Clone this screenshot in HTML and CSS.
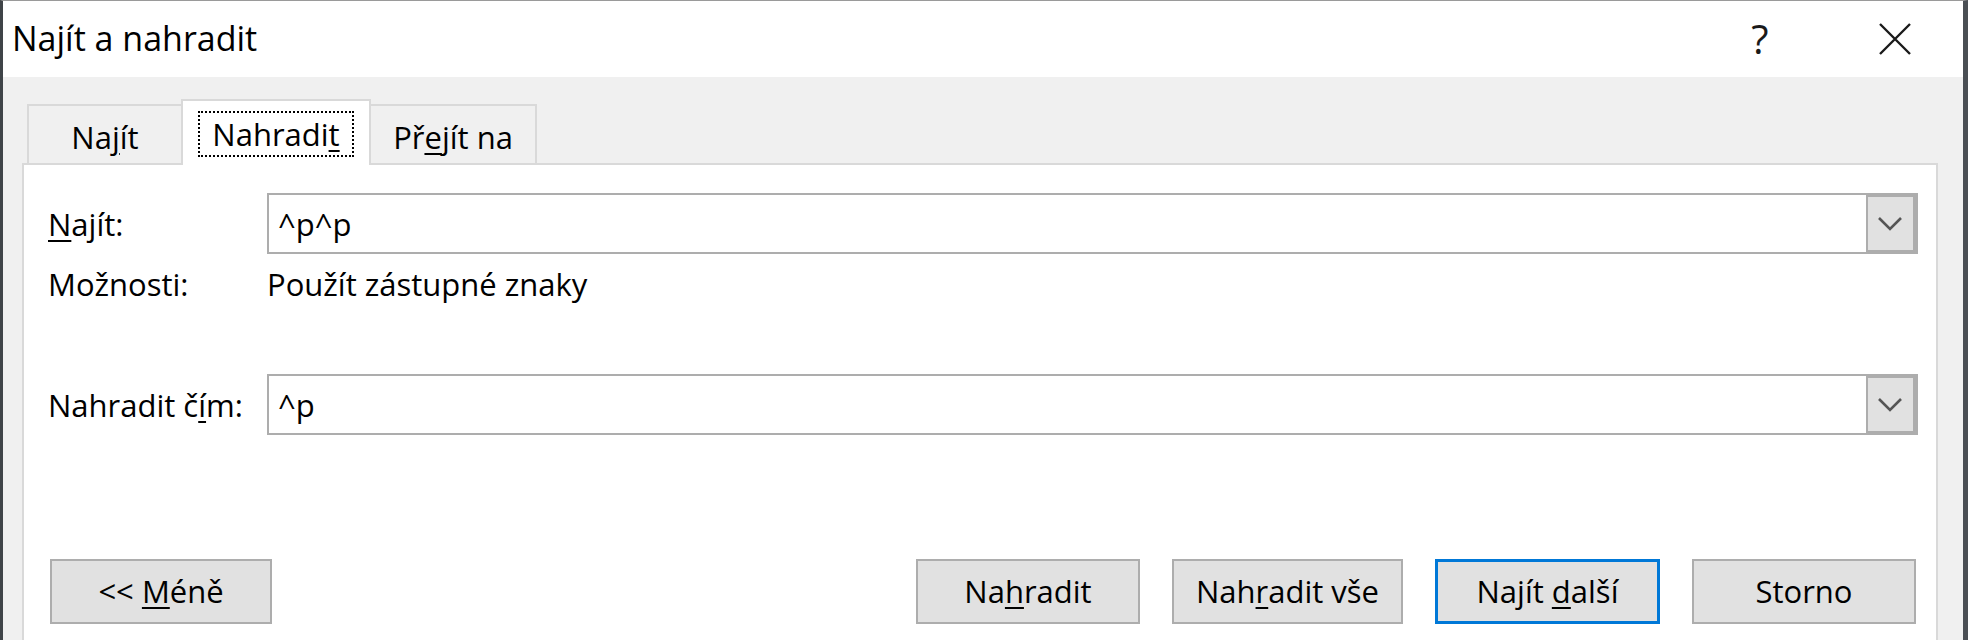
FILE: index.html
```html
<!DOCTYPE html>
<html lang="cs">
<head>
<meta charset="utf-8">
<title>Najít a nahradit</title>
<link rel="stylesheet" href="styles.css">
</head>
<body>
<div class="window">
  <div class="titlebar">
    <div class="title">Najít a nahradit</div>
    <div class="help">?</div>
    <div class="close">
      <svg width="32" height="32" viewBox="0 0 32 32"><path d="M1 1 L31 31 M31 1 L1 31" stroke="#1a1a1a" stroke-width="2.4" fill="none"/></svg>
    </div>
  </div>
  <div class="client">
    <div class="tabs">
      <div class="tab tab-find">Na<u>j</u>ít</div>
      <div class="tab tab-active"><span class="focus">Nahradi<u>t</u></span></div>
      <div class="tab tab-goto">Př<u>e</u>jít na</div>
    </div>
    <div class="panel">
      <div class="form">
        <div class="lbl"><u>N</u>ajít:</div>
        <div class="combo">
          <span class="val">^p^p</span>
          <span class="drop"><svg width="26" height="15" viewBox="0 0 26 15"><polyline points="2,2 13,13 24,2" fill="none" stroke="#555" stroke-width="2.6"/></svg></span>
        </div>
        <div class="lbl opt-row">Možnosti:</div>
        <div class="opt opt-row">Použít zástupné znaky</div>
        <div class="lbl repl-row">Nahradit č<u>í</u>m:</div>
        <div class="combo repl-row">
          <span class="val">^p</span>
          <span class="drop"><svg width="26" height="15" viewBox="0 0 26 15"><polyline points="2,2 13,13 24,2" fill="none" stroke="#555" stroke-width="2.6"/></svg></span>
        </div>
      </div>
      <div class="buttons">
        <div class="btn btn-less">&lt;&lt; <u>M</u>éně</div>
        <div class="btn btn-first">Na<u>h</u>radit</div>
        <div class="btn btn-wide">Nah<u>r</u>adit vše</div>
        <div class="btn btn-default">Najít <u>d</u>alší</div>
        <div class="btn">Storno</div>
      </div>
    </div>
  </div>
</div>
</body>
</html>
```

FILE: styles.css
```css
* { box-sizing: border-box; }
html, body { margin: 0; padding: 0; }
body {
  width: 1968px;
  height: 640px;
  overflow: hidden;
  background: #f0f0f0;
  font-family: "Open Sans", "Noto Sans", sans-serif;
  font-size: 31px;
  color: #000;
}
u {
  text-decoration: underline;
  text-decoration-thickness: 2px;
  text-underline-offset: 4px;
}
.window {
  width: 1968px;
  height: 640px;
  border-left: 3px solid #3f4448;
  border-right: 5px solid #4a4f54;
  border-top: 1px solid #9a9a9a;
  display: flex;
  flex-direction: column;
  background: #f0f0f0;
}
.titlebar {
  height: 76px;
  flex: none;
  background: #fff;
  display: flex;
  align-items: center;
  padding-left: 9px;
  padding-right: 23px;
}
.title {
  font-size: 34px;
  line-height: 42px;
  margin-top: -2px;
}
.help {
  margin-left: auto;
  width: 60px;
  text-align: center;
  font-size: 40px;
  line-height: 42px;
  color: #1a1a1a;
}
.close {
  width: 90px;
  margin-left: 60px;
  display: flex;
  justify-content: center;
  align-items: center;
}
.close svg { display: block; }
.client {
  flex: 1;
  padding: 22px 25px 0 19px;
  display: flex;
  flex-direction: column;
}
.tabs {
  display: flex;
  align-items: flex-end;
  padding-left: 5px;
  height: 66px;
  margin-bottom: -2px;
  position: relative;
  z-index: 1;
}
.tab {
  height: 59px;
  margin-bottom: 2px;
  border: 2px solid #d9d9d9;
  border-bottom: none;
  background: #f0f0f0;
  text-align: center;
  line-height: 42px;
  padding-top: 10px;
}
.tab-find { width: 156px; }
.tab-goto { width: 168px; margin-left: -2px; }
.tab-active {
  width: 190px;
  height: 66px;
  margin-bottom: 0;
  margin-left: -2px;
  background: #fff;
  padding-top: 10px;
  position: relative;
  z-index: 2;
}
.focus {
  display: inline-block;
  border: 2px dotted #000;
  padding: 0 12px;
  line-height: 42px;
}
.panel {
  flex: 1;
  background: #fff;
  border: 2px solid #d9d9d9;
  border-bottom: none;
  padding: 28px 18px 0 24px;
  display: flex;
  flex-direction: column;
}
.form {
  display: grid;
  grid-template-columns: 219px 1fr;
  align-items: center;
}
.lbl, .opt { line-height: 42px; }
.opt-row { margin-top: 9px; }
.repl-row { margin-top: 69px; }
.combo {
  height: 61px;
  border: 2px solid #adadad;
  display: flex;
  align-items: center;
  background: #fff;
}
.combo .val {
  flex: 1;
  padding-left: 9px;
  line-height: 42px;
}
.combo .drop {
  align-self: stretch;
  width: 52px;
  border: solid #adadad;
  border-width: 4px 5px 4px 2px;
  margin: -2px -2px -2px 0;
  background: #e1e1e1;
  display: flex;
  align-items: center;
  justify-content: center;
}
.combo .drop svg { display: block; margin-left: -2px; }
.buttons {
  display: flex;
  margin: 124px 2px 0 2px;
  gap: 32px;
}
.btn {
  display: block;
  width: 224px;
  height: 65px;
  background: #e1e1e1;
  border: 2px solid #adadad;
  text-align: center;
  line-height: 42px;
  padding-top: 9px;
  white-space: nowrap;
}
.btn-less { width: 222px; }
.btn-first { margin-left: auto; }
.btn-wide { width: 231px; }
.btn-default { border: 3px solid #0078d7; width: 225px; padding-top: 8px; }
```
